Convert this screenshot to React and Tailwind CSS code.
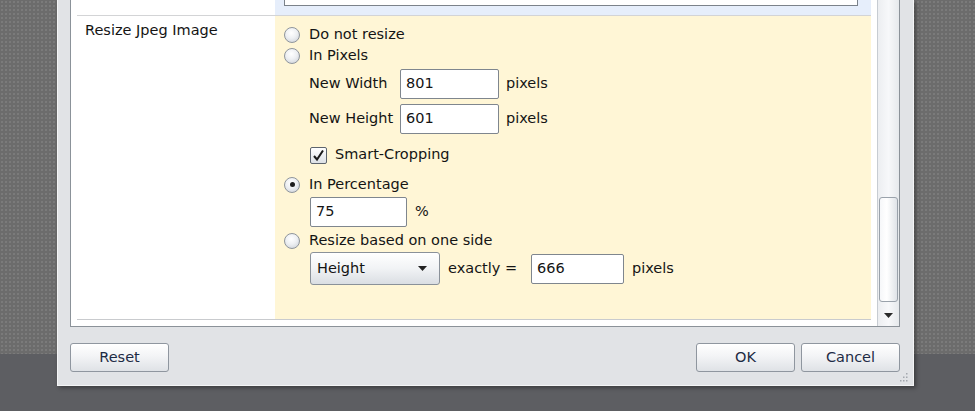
import React from 'react';

const font = { fontFamily: '"DejaVu Sans", Verdana, sans-serif' };

function Radio({ checked, label }) {
  return (
    <div className="flex h-[21px] items-center gap-[9px]">
      <span className="flex h-[16px] w-[16px] items-center justify-center rounded-full border border-[#8f959c] bg-[radial-gradient(circle_at_45%_35%,#ffffff_0%,#eef0f3_45%,#c8cdd4_100%)]">
        {checked && <span className="h-[5px] w-[5px] rounded-full bg-[#1c1c1c]" />}
      </span>
      <span>{label}</span>
    </div>
  );
}

function Field({ value, w }) {
  return (
    <div className={`flex h-[30px] items-center rounded-[2px] border border-[#7f868e] bg-white pl-[5px] ${w}`}>
      {value}
    </div>
  );
}

function Btn({ children }) {
  return (
    <button className="h-[29px] w-[99px] rounded-[3px] border border-[#8f969f] bg-[linear-gradient(to_bottom,#ffffff_0%,#f3f4f6_45%,#dfe2e6_100%)] pt-px text-[#1d2b45] shadow-[inset_0_1px_0_#ffffff]">
      {children}
    </button>
  );
}

export default function App() {
  return (
    <div
      className="h-[411px] w-[975px] overflow-hidden bg-[#5d5e62] text-[14.5px] text-[#141414]"
      style={font}
    >
      <div className="h-[354px] bg-[#6c6c6c] bg-[radial-gradient(circle,#7b7b7b_0.7px,transparent_0.9px)] bg-[length:4px_4px]">
        <div className="ml-[57px] h-[386px] w-[857px] border-b border-l border-r border-[#f4f5f6] bg-[#e1e3e6] shadow-[2px_2px_4px_rgba(0,0,0,0.35)]">
          {/* settings panel */}
          <div className="ml-[12px] flex h-[327px] w-[830px] border-b border-l border-r border-[#8b9299] bg-white">
            <div className="flex w-[806px] flex-col pr-[6px]">
              <div className="flex h-[15px]">
                <div className="w-[204px]" />
                <div className="flex-1 bg-[#e6eefb] pl-[9px]">
                  <div className="h-[6px] w-[574px] border-b border-l border-r border-[#7b828a] bg-white" />
                </div>
              </div>
              <div className="ml-[6px] h-px bg-[#d3d4d6]" />
              <div className="flex h-[303px]">
                <div className="w-[204px] pl-[14px] pt-[4px]">Resize Jpeg Image</div>
                <div className="flex-1 bg-[#fff6d6] pl-[9px] pt-[8px]">
                  <Radio label="Do not resize" />
                  <Radio label="In Pixels" />
                  <div className="mt-[3px] flex items-center pl-[25px]">
                    <span className="w-[91px]">New Width</span>
                    <Field value="801" w="w-[99px]" />
                    <span className="ml-[7px]">pixels</span>
                  </div>
                  <div className="mt-[5px] flex items-center pl-[25px]">
                    <span className="w-[91px]">New Height</span>
                    <Field value="601" w="w-[99px]" />
                    <span className="ml-[7px]">pixels</span>
                  </div>
                  <div className="mt-[11px] flex h-[20px] items-center gap-[8px] pl-[26px]">
                    <span className="flex h-[17px] w-[17px] items-center justify-center rounded-[2px] border border-[#5d646d] bg-[linear-gradient(to_bottom,#ffffff,#dde1e6)]">
                      <svg width="13" height="13" viewBox="0 0 13 13">
                        <path d="M2 7 L5 10.5 L11 1.5" fill="none" stroke="#1a1a1a" strokeWidth="2" />
                      </svg>
                    </span>
                    <span>Smart-Cropping</span>
                  </div>
                  <div className="mt-[9px]">
                    <Radio checked label="In Percentage" />
                  </div>
                  <div className="mt-[2px] flex items-center pl-[26px]">
                    <Field value="75" w="w-[97px]" />
                    <span className="ml-[8px]">%</span>
                  </div>
                  <div className="mt-[3px]">
                    <Radio label="Resize based on one side" />
                  </div>
                  <div className="mt-[1px] flex h-[33px] items-center pl-[26px]">
                    <div className="flex h-[33px] w-[130px] items-center justify-between rounded-[3px] border border-[#8a9199] bg-[linear-gradient(to_bottom,#ffffff_0%,#f1f3f5_50%,#dadee3_100%)] pl-[6px] pr-[12px]">
                      <span>Height</span>
                      <svg width="9" height="5" viewBox="0 0 9 5">
                        <path d="M0 0 H9 L4.5 5 Z" fill="#222" />
                      </svg>
                    </div>
                    <span className="ml-[8px] w-[83px]">exactly =</span>
                    <Field value="666" w="w-[93px]" />
                    <span className="ml-[8px]">pixels</span>
                  </div>
                </div>
              </div>
              <div className="ml-[6px] h-px bg-[#c9cbce]" />
            </div>
            {/* scrollbar */}
            <div className="flex w-[22px] flex-col border-l border-[#c7ccd2] bg-[linear-gradient(to_right,#eceef1,#f7f8fa_50%,#e6e9ec)]">
              <div className="h-[197px]" />
              <div className="mx-px h-[105px] rounded-[3px] border border-[#9aa2ab] bg-[linear-gradient(to_right,#f6f7f9,#ffffff_40%,#dfe3e8)]" />
              <div className="flex flex-1 items-center justify-center pt-[2px]">
                <svg width="9" height="5" viewBox="0 0 9 5">
                  <path d="M0 0 H9 L4.5 5 Z" fill="#2a2a2a" />
                </svg>
              </div>
            </div>
          </div>
          {/* buttons */}
          <div className="relative mt-[16px] flex pl-[12px] pr-[13px]">
            <Btn>Reset</Btn>
            <div className="flex-1" />
            <div className="flex gap-[6px]">
              <Btn>OK</Btn>
              <Btn>Cancel</Btn>
            </div>
            <svg className="absolute right-[5px] top-[30px]" width="8" height="9" viewBox="0 0 8 9">
              <g fill="#a3a8ae">
                <rect x="6" y="0" width="1.5" height="1.5" />
                <rect x="6" y="3.5" width="1.5" height="1.5" />
                <rect x="3" y="3.5" width="1.5" height="1.5" />
                <rect x="6" y="7" width="1.5" height="1.5" />
                <rect x="3" y="7" width="1.5" height="1.5" />
                <rect x="0" y="7" width="1.5" height="1.5" />
              </g>
            </svg>
          </div>
        </div>
      </div>
    </div>
  );
}
